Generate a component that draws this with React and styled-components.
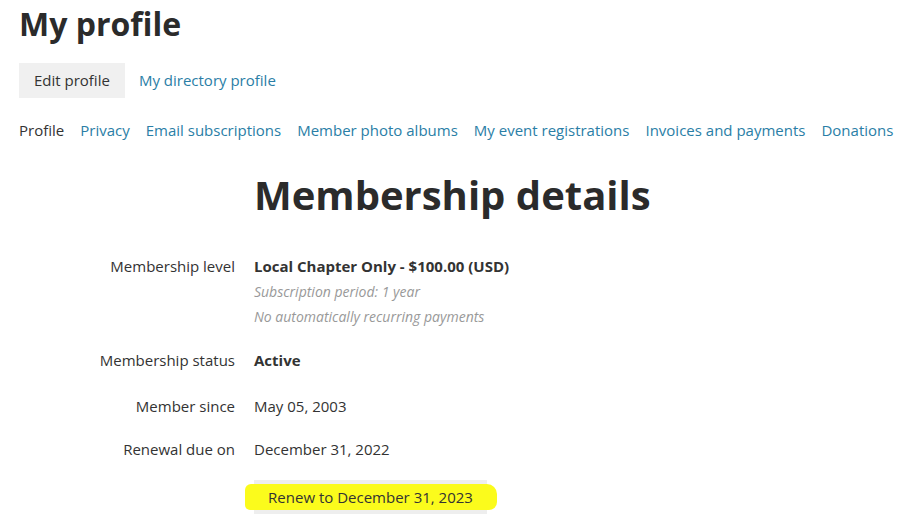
import styled, { createGlobalStyle } from "styled-components";

const GlobalStyle = createGlobalStyle`
  body {
    margin: 0;
    background: #fff;
    font-family: "Open Sans", "Liberation Sans", sans-serif;
    color: #333;
  }
`;

const Page = styled.div`
  padding: 4px 19px 0 19px;
`;

const Title = styled.h1`
  margin: 0;
  font-size: 32px;
  font-weight: 700;
  line-height: 40px;
  color: #2b2b2b;
`;

const ActionBar = styled.div`
  display: flex;
  align-items: center;
  gap: 0;
  margin-top: 19px;
`;

const ActionButton = styled.a`
  display: inline-block;
  font-size: 15px;
  line-height: 35px;
  padding: ${(props) => (props.active ? "0 15px 0 15px" : "0 14px 0 14px")};
  color: ${(props) => (props.active ? "#333" : "#2a7ea6")};
  background: ${(props) => (props.active ? "#f0f0f0" : "transparent")};
  text-decoration: none;
`;

const Tabs = styled.nav`
  display: flex;
  gap: 16px;
  margin-top: 18px;
`;

const Tab = styled.a`
  font-size: 15px;
  line-height: 28px;
  color: ${(props) => (props.active ? "#333" : "#2a7ea6")};
  text-decoration: none;
  white-space: nowrap;
`;

const Details = styled.div`
  display: grid;
  grid-template-columns: 216px 1fr;
  column-gap: 19px;
  margin-top: 21px;
`;

const SectionTitle = styled.h2`
  grid-column: 2;
  margin: 0 0 29px 0;
  font-size: 40px;
  font-weight: 700;
  line-height: 60px;
  color: #2b2b2b;
`;

const Label = styled.div`
  grid-column: 1;
  text-align: right;
  font-size: 15px;
  line-height: 25px;
  margin-bottom: ${(props) => props.gap || 19}px;
`;

const Value = styled.div`
  grid-column: 2;
  font-size: 15px;
  line-height: 25px;
  margin-bottom: ${(props) => props.gap || 19}px;
`;

const Strong = styled.div`
  font-weight: 700;
`;

const Note = styled.div`
  font-style: italic;
  font-size: 14px;
  color: #999;
`;

const RenewButton = styled.a`
  grid-column: 2;
  justify-self: start;
  position: relative;
  display: inline-block;
  width: 233px;
  height: 34px;
  line-height: 34px;
  background: #eeeeee;
  text-align: center;
  font-size: 15px;
  color: #333;
  margin-top: -1px;

  &::before {
    content: "";
    position: absolute;
    left: -9px;
    right: -10px;
    top: 4px;
    bottom: 4px;
    background: #fbfb1c;
    border-radius: 6px 10px 8px 5px;
  }

  span {
    position: relative;
  }
`;

const tabs = [
  "Profile",
  "Privacy",
  "Email subscriptions",
  "Member photo albums",
  "My event registrations",
  "Invoices and payments",
  "Donations",
];

export default function App() {
  return (
    <>
      <GlobalStyle />
      <Page>
        <Title>My profile</Title>
        <ActionBar>
          <ActionButton active>Edit profile</ActionButton>
          <ActionButton>My directory profile</ActionButton>
        </ActionBar>
        <Tabs>
          {tabs.map((t, i) => (
            <Tab key={t} active={i === 0}>
              {t}
            </Tab>
          ))}
        </Tabs>
        <Details>
          <SectionTitle>Membership details</SectionTitle>

          <Label>Membership level</Label>
          <Value>
            <Strong>Local Chapter Only - $100.00 (USD)</Strong>
            <Note>Subscription period: 1 year</Note>
            <Note>No automatically recurring payments</Note>
          </Value>

          <Label gap={21}>Membership status</Label>
          <Value gap={21}>
            <Strong>Active</Strong>
          </Value>

          <Label gap={18}>Member since</Label>
          <Value gap={18}>May 05, 2003</Value>

          <Label>Renewal due on</Label>
          <Value>December 31, 2022</Value>

          <RenewButton>
            <span>Renew to December 31, 2023</span>
          </RenewButton>
        </Details>
      </Page>
    </>
  );
}
